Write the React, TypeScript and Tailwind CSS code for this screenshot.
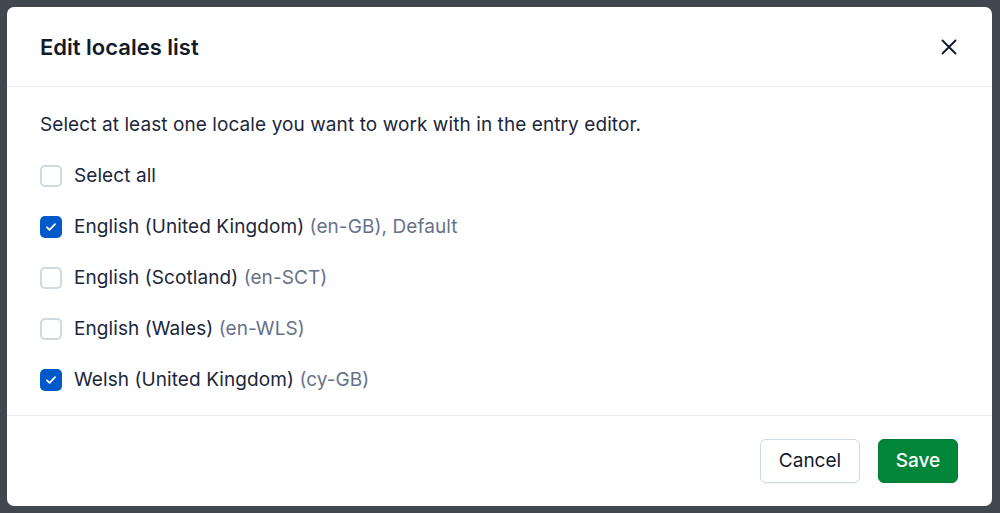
import React from "react";

const Check = () => (
  <svg width="14" height="14" viewBox="0 0 14 14" fill="none">
    <path d="M3 7.3l2.6 2.6L11 4.2" stroke="white" strokeWidth="1.8" strokeLinecap="round" strokeLinejoin="round" />
  </svg>
);

const Row = ({ checked, label, hint }: { checked?: boolean; label: string; hint?: string }) => (
  <div className="flex items-center h-[22px]">
    {checked ? (
      <span className="w-[22px] h-[22px] rounded-[5px] bg-[#0059c8] flex items-center justify-center shrink-0">
        <Check />
      </span>
    ) : (
      <span className="w-[22px] h-[22px] rounded-[5px] border-2 border-[#cfd9e0] bg-white shrink-0" />
    )}
    <span className="ml-[12px] text-[19px] leading-[24px] tracking-[0.08px] text-[#1b273a]">
      {label}
      {hint && <span className="text-[#67728a]"> {hint}</span>}
    </span>
  </div>
);

export default function App() {
  return (
    <div
      className="w-[1000px] h-[513px] bg-[#41474f] p-[7px] pr-[8px]"
      style={{ fontFamily: "Inter, 'Noto Sans', sans-serif" }}
    >
      <div className="w-full h-[499px] bg-white rounded-[7px] flex flex-col">
        <div className="h-[80px] flex items-center justify-between pl-[33px] pr-[34px] border-b border-[#e7ebee] shrink-0">
          <h1 className="text-[22px] font-semibold text-[#111b2b] pt-[1px]">Edit locales list</h1>
          <svg width="18" height="18" viewBox="0 0 18 18" fill="none">
            <path d="M2.5 2.5l13 13M15.5 2.5l-13 13" stroke="#111b2b" strokeWidth="1.9" strokeLinecap="round" />
          </svg>
        </div>
        <div className="flex-1 pl-[33px] pt-[26px]">
          <p className="text-[19px] text-[#1b273a] leading-[24px] tracking-[0.08px]">
            Select at least one locale you want to work with in the entry editor.
          </p>
          <div className="mt-[28px] flex flex-col gap-[29px]">
            <Row label="Select all" />
            <Row checked label="English (United Kingdom)" hint="(en-GB), Default" />
            <Row label="English (Scotland)" hint="(en-SCT)" />
            <Row label="English (Wales)" hint="(en-WLS)" />
            <Row checked label="Welsh (United Kingdom)" hint="(cy-GB)" />
          </div>
        </div>
        <div className="h-[91px] border-t border-[#e7ebee] flex items-center justify-end gap-[18px] pr-[34px] shrink-0">
          <button className="h-[44px] w-[100px] rounded-[6px] border border-[#cfd9e0] bg-white text-[19px] text-[#111b2b] pt-[1px] shadow-[0_1px_0_rgba(0,0,0,0.04)]">
            Cancel
          </button>
          <button className="h-[44px] w-[80px] rounded-[6px] bg-[#008539] border border-[#007a34] text-[19px] font-medium text-white pt-[1px]">
            Save
          </button>
        </div>
      </div>
    </div>
  );
}
